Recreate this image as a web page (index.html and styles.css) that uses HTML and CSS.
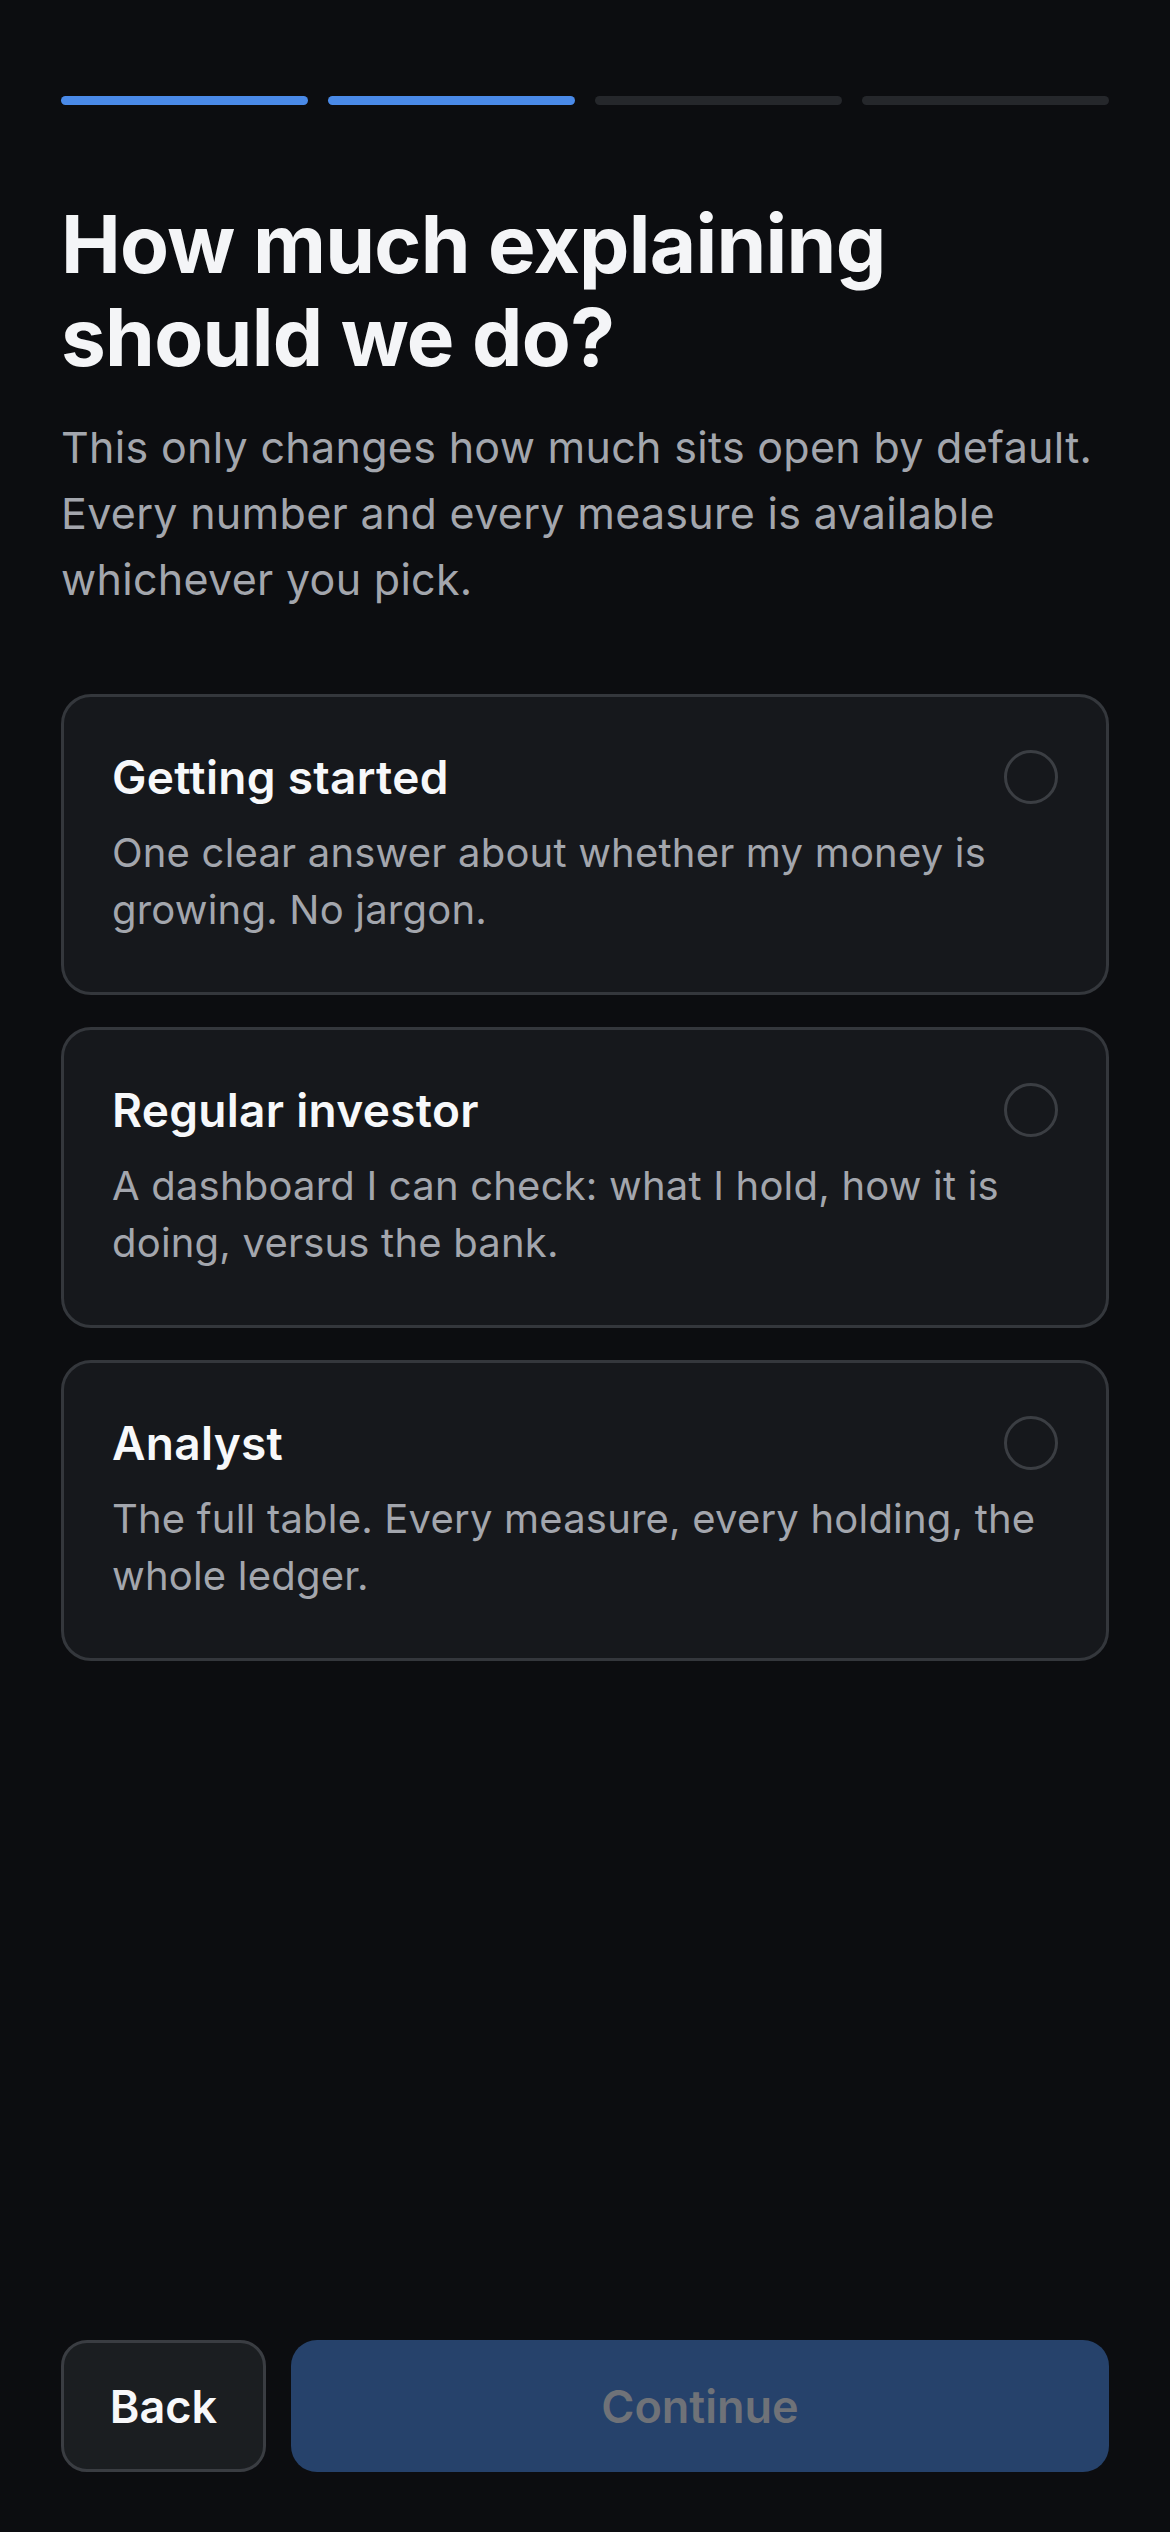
FILE: index.html
```html
<!DOCTYPE html>
<html lang="en">
<head>
    <meta charset="UTF-8">
    <meta name="viewport" content="width=device-width, initial-scale=1.0">
    <title>Explaining level</title>
    <link rel="stylesheet" href="styles.css">
</head>
<body>
    <div class="screen">
        <div class="progress">
            <span class="step done"></span>
            <span class="step done"></span>
            <span class="step"></span>
            <span class="step"></span>
        </div>

        <h1>How much explaining should we do?</h1>
        <p class="lead">This only changes how much sits open by default. Every number and every measure is available whichever you pick.</p>

        <div class="options">
            <div class="option">
                <div class="option-head">
                    <span class="option-title">Getting started</span>
                    <span class="radio"></span>
                </div>
                <p class="option-text">One clear answer about whether my money is growing. No jargon.</p>
            </div>
            <div class="option">
                <div class="option-head">
                    <span class="option-title">Regular investor</span>
                    <span class="radio"></span>
                </div>
                <p class="option-text">A dashboard I can check: what I hold, how it is doing, versus the bank.</p>
            </div>
            <div class="option">
                <div class="option-head">
                    <span class="option-title">Analyst</span>
                    <span class="radio"></span>
                </div>
                <p class="option-text">The full table. Every measure, every holding, the whole ledger.</p>
            </div>
        </div>

        <div class="actions">
            <button class="btn-back">Back</button>
            <button class="btn-continue" disabled>Continue</button>
        </div>
    </div>
</body>
</html>
```

FILE: styles.css
```css
* {
    box-sizing: border-box;
}
body {
    margin: 0;
    background-color: #0c0d10;
    color: #f4f5f7;
    font-family: Inter, "Noto Sans", Arial, sans-serif;
}
.screen {
    min-height: 2532px;
    display: flex;
    flex-direction: column;
    padding: 96px 61px 60px;
}
.progress {
    display: flex;
    gap: 20px;
}
.step {
    flex: 1;
    height: 9px;
    border-radius: 5px;
    background-color: #25272b;
}
.step.done {
    background-color: #4a8ae8;
}
h1 {
    margin: 92px 0 0;
    font-size: 80px;
    line-height: 93px;
    font-weight: 700;
    letter-spacing: -0.7px;
    max-width: 920px;
}
.lead {
    margin: 31px 0 0;
    font-size: 43px;
    line-height: 66px;
    letter-spacing: 0.3px;
    color: #a3a6ad;
}
.options {
    margin-top: 82px;
    display: flex;
    flex-direction: column;
    gap: 32px;
}
.option {
    background-color: #16181c;
    border: 3px solid #34373c;
    border-radius: 30px;
    padding: 51px 48px 54px;
}
.option-head {
    display: flex;
    align-items: center;
    justify-content: space-between;
}
.option-title {
    font-size: 46px;
    line-height: 58px;
    font-weight: 600;
    letter-spacing: 0.3px;
    color: #f7f8fa;
}
.radio {
    width: 54px;
    height: 54px;
    border: 3px solid #3b3e43;
    border-radius: 50%;
}
.option-text {
    margin: 18px 0 0;
    font-size: 40px;
    line-height: 57px;
    letter-spacing: 0.2px;
    color: #a3a6ad;
}
.actions {
    margin-top: auto;
    display: flex;
    gap: 25px;
}
.actions button {
    height: 132px;
    border-radius: 26px;
    font-family: inherit;
    font-size: 45px;
    font-weight: 600;
}
.btn-back {
    width: 205px;
    background-color: #1b1e21;
    border: 3px solid #3a3d42;
    color: #f7f8fa;
}
.btn-continue {
    flex: 1;
    background-color: #26426b;
    border: none;
    color: #6f7278;
}
```
